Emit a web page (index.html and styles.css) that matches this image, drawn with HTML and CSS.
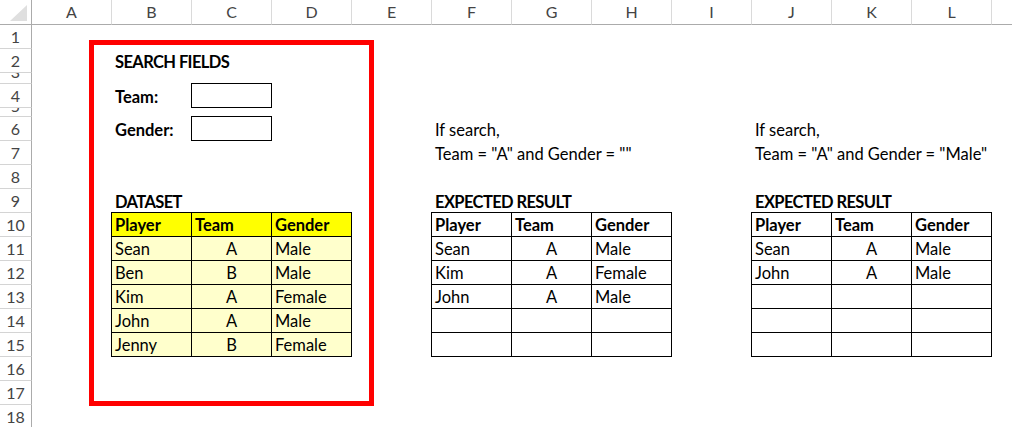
FILE: index.html
```html
<!DOCTYPE html>
<html>
<head>
<meta charset="utf-8">
<link rel="stylesheet" href="styles.css">
</head>
<body>
<div class="sheet">
  <div class="corner"><svg width="31" height="24" viewBox="0 0 31 24"><polygon points="27,5 27,21 10,21" fill="#dfdfdf"/></svg></div>
  <div class="ch">A</div><div class="ch">B</div><div class="ch">C</div><div class="ch">D</div><div class="ch">E</div><div class="ch">F</div><div class="ch">G</div><div class="ch">H</div><div class="ch">I</div><div class="ch">J</div><div class="ch">K</div><div class="ch">L</div><div class="ch"></div>

  <div class="rh">1</div>
  <div class="rh">2</div>
  <div class="rh rh-short3"><span>3</span></div>
  <div class="rh">4</div>
  <div class="rh rh-short5"><span>5</span></div>
  <div class="rh">6</div>
  <div class="rh">7</div>
  <div class="rh">8</div>
  <div class="rh">9</div>
  <div class="rh">10</div>
  <div class="rh">11</div>
  <div class="rh">12</div>
  <div class="rh">13</div>
  <div class="rh">14</div>
  <div class="rh">15</div>
  <div class="rh">16</div>
  <div class="rh">17</div>
  <div class="rh">18</div>

  <div class="cell bold caps r2 cB">SEARCH FIELDS</div>
  <div class="cell bold r4 cB">Team:</div>
  <div class="inbox r4 cC"></div>
  <div class="cell bold r6 cB">Gender:</div>
  <div class="inbox r6 cC"></div>

  <div class="cell r6 cF">If search,</div>
  <div class="cell r7 cF">Team = "A" and Gender = ""</div>
  <div class="cell r6 cJ">If search,</div>
  <div class="cell r7 cJ">Team = "A" and Gender = "Male"</div>

  <div class="cell bold caps r9 cB">DATASET</div>
  <div class="cell bold caps r9 cF">EXPECTED RESULT</div>
  <div class="cell bold caps r9 cJ">EXPECTED RESULT</div>

  <div class="tbl tB">
    <div class="hd">Player</div><div class="hd">Team</div><div class="hd">Gender</div>
    <div class="yl">Sean</div><div class="yl ctr">A</div><div class="yl">Male</div>
    <div class="yl">Ben</div><div class="yl ctr">B</div><div class="yl">Male</div>
    <div class="yl">Kim</div><div class="yl ctr">A</div><div class="yl">Female</div>
    <div class="yl">John</div><div class="yl ctr">A</div><div class="yl">Male</div>
    <div class="yl">Jenny</div><div class="yl ctr">B</div><div class="yl">Female</div>
  </div>

  <div class="tbl tF">
    <div class="bold">Player</div><div class="bold">Team</div><div class="bold">Gender</div>
    <div>Sean</div><div class="ctr">A</div><div>Male</div>
    <div>Kim</div><div class="ctr">A</div><div>Female</div>
    <div>John</div><div class="ctr">A</div><div>Male</div>
    <div></div><div></div><div></div>
    <div></div><div></div><div></div>
  </div>

  <div class="tbl tJ">
    <div class="bold">Player</div><div class="bold">Team</div><div class="bold">Gender</div>
    <div>Sean</div><div class="ctr">A</div><div>Male</div>
    <div>John</div><div class="ctr">A</div><div>Male</div>
    <div></div><div></div><div></div>
    <div></div><div></div><div></div>
    <div></div><div></div><div></div>
  </div>

  <div class="frame"></div>
</div>
</body>
</html>
```

FILE: styles.css
```css
html, body {
  margin: 0;
  padding: 0;
  background: #fff;
  overflow: hidden;
}

.sheet {
  position: relative;
  display: grid;
  grid-template-columns: 32px repeat(13, 80px);
  grid-template-rows: 25px 24px 24px 11px 24px 9px repeat(13, 24px);
  width: 1012px;
  height: 427px;
  overflow: hidden;
  font-family: Lato, "Open Sans", sans-serif;
  font-size: 16.5px;
  color: #000;
}

.sheet > div {
  box-sizing: border-box;
  min-width: 0;
}

.corner {
  grid-row: 1;
  grid-column: 1;
  border-right: 1px solid #ababab;
  border-bottom: 1px solid #ababab;
}
.corner svg { display: block; }

.ch {
  grid-row: 1;
  border-right: 1px solid #dadada;
  border-bottom: 1px solid #ababab;
  text-align: center;
  line-height: 24px;
  color: #444;
  font-size: 16px;
}

.rh {
  grid-column: 1;
  border-right: 1px solid #ababab;
  border-bottom: 1px solid #d4d4d4;
  text-align: center;
  line-height: 23px;
  color: #444;
  font-size: 16px;
  overflow: hidden;
}
.rh-short3 span { display: block; margin-top: -13px; }
.rh-short5 span { display: block; margin-top: -14px; }

.cell {
  line-height: 26px;
  padding-left: 3px;
  white-space: nowrap;
  overflow: visible;
}
.bold { font-weight: bold; }
.caps { letter-spacing: -0.6px; }

.r2 { grid-row: 3; }
.r4 { grid-row: 5; }
.r6 { grid-row: 7; }
.r7 { grid-row: 8; }
.r9 { grid-row: 10; }

.cB { grid-column: 3; }
.cC { grid-column: 4; }
.cF { grid-column: 7; }
.cJ { grid-column: 11; }

.inbox {
  width: 81px;
  height: 25px;
  margin: -1px 0 0 -1px;
  border: 1px solid #000;
  align-self: start;
  justify-self: start;
}

.tbl {
  grid-row: 11 / span 6;
  display: grid;
  grid-template-columns: repeat(3, 79px);
  grid-auto-rows: 23px;
  gap: 1px;
  padding: 1px;
  background: #000;
  width: 241px;
  height: 145px;
  margin: -1px 0 0 -1px;
  align-self: start;
  justify-self: start;
}
.tB { grid-column: 3 / span 3; }
.tF { grid-column: 7 / span 3; }
.tJ { grid-column: 11 / span 3; }

.tbl > div {
  background: #fff;
  line-height: 25px;
  height: 23px;
  overflow: hidden;
  padding-left: 3px;
  white-space: nowrap;
}
.tbl > .hd {
  background: #ffff00;
  font-weight: bold;
}
.tbl > .yl {
  background: #ffffcc;
}
.tbl > .ctr {
  text-align: center;
  padding-left: 0;
}

.frame {
  position: absolute;
  left: 89px;
  top: 40px;
  width: 285px;
  height: 366px;
  box-sizing: border-box;
  border: 5px solid #ff0000;
  pointer-events: none;
}
```
